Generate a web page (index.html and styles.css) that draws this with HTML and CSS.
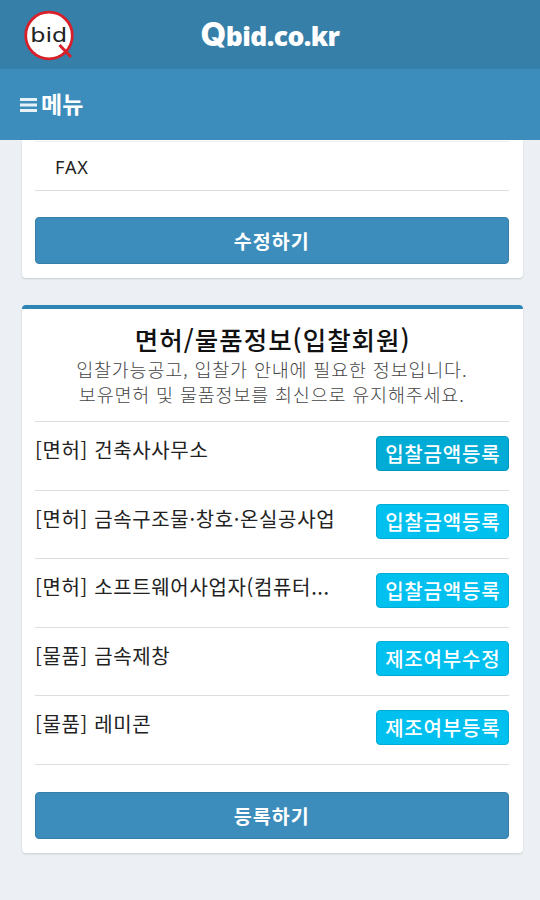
FILE: index.html
```html
<!DOCTYPE html>
<html lang="ko">
<head>
<meta charset="utf-8">
<title>Qbid.co.kr</title>
<link rel="stylesheet" href="styles.css">
</head>
<body>
<header class="main-header">
  <svg class="logo" width="54" height="54" viewBox="0 0 54 54">
    <circle cx="27" cy="27.5" r="23.3" fill="#fff" stroke="#d7202a" stroke-width="2.8"/>
    <text class="logo-text" x="8.3" y="33.8" textLength="37" lengthAdjust="spacingAndGlyphs">bid</text>
    <path d="M37.5 37 L49 49" stroke="#d7202a" stroke-width="3"/>
  </svg>
  <h1 class="site-name"><span class="site-q">Q</span>bid.co.kr</h1>
</header>
<nav class="navbar">
  <svg class="menu-icon" width="17" height="15" viewBox="0 0 17 15">
    <path d="M0 2.5h17M0 8h17M0 13.5h17" stroke="#e6f1f8" stroke-width="3"/>
  </svg>
  <span class="menu-text">메뉴</span>
</nav>
<section class="content">
  <div class="box box-info">
    <div class="fax">FAX</div>
    <button class="btn btn-primary">수정하기</button>
  </div>
  <div class="box box-license">
    <h2 class="box-title">면허/물품정보(입찰회원)</h2>
    <p class="box-desc">입찰가능공고, 입찰가 안내에 필요한 정보입니다.<br>보유면허 및 물품정보를 최신으로 유지해주세요.</p>
    <ul class="list">
      <li class="item"><span class="name">[면허] 건축사사무소</span><button class="btn btn-info active">입찰금액등록</button></li>
      <li class="item"><span class="name">[면허] 금속구조물·창호·온실공사업</span><button class="btn btn-info">입찰금액등록</button></li>
      <li class="item"><span class="name">[면허] 소프트웨어사업자(컴퓨터...</span><button class="btn btn-info">입찰금액등록</button></li>
      <li class="item"><span class="name">[물품] 금속제창</span><button class="btn btn-info">제조여부수정</button></li>
      <li class="item"><span class="name">[물품] 레미콘</span><button class="btn btn-info">제조여부등록</button></li>
    </ul>
    <button class="btn btn-primary">등록하기</button>
  </div>
</section>
</body>
</html>
```
FILE: styles.css
```css
* {
  box-sizing: border-box;
}
body {
  margin: 0;
  height: 900px;
  overflow: hidden;
  background-color: #ecf0f5;
  color: #222;
  font-family: "Noto Sans CJK KR", sans-serif;
}
.main-header {
  display: grid;
  grid-template-columns: 54px 1fr 54px;
  align-items: center;
  height: 69px;
  padding: 0 22px;
  background-color: #367fa9;
}
.logo {
  display: block;
}
.logo-text {
  font-family: "DejaVu Sans", sans-serif;
  font-size: 20px;
  fill: #222;
}
.site-name {
  margin: 0;
  color: #fff;
  font-family: "Open Sans", sans-serif;
  font-size: 26.5px;
  font-weight: 800;
  line-height: 40px;
  letter-spacing: -0.6px;
  text-align: center;
  white-space: nowrap;
}
.site-q {
  font-family: Inter, sans-serif;
  font-size: 33px;
  font-weight: 800;
}
.navbar {
  display: flex;
  align-items: center;
  gap: 4px;
  height: 71px;
  padding: 0 20px;
  background-color: #3c8dbc;
  color: #fff;
}
.menu-text {
  padding-bottom: 4px;
  font-size: 23px;
  font-weight: bold;
  line-height: 30px;
}
.content {
  padding: 0 17.5px 0 21.5px;
}
.box {
  padding: 0 14px 14px 13.5px;
  background-color: #fff;
  border-radius: 4px;
  box-shadow: 0 1px 2px rgba(0,0,0,0.15);
}
.box-info {
  height: 138px;
  padding-top: 1px;
  border-radius: 0 0 4px 4px;
}
.fax {
  height: 50px;
  margin-bottom: 26px;
  padding-left: 20px;
  border-top: 1px solid #eee;
  border-bottom: 1px solid #ddd;
  font-family: "Noto Sans", sans-serif;
  font-size: 18px;
  line-height: 50px;
  letter-spacing: 0.9px;
}
.box-license {
  height: 548px;
  margin-top: 27px;
  border-top: 4px solid #2e86b5;
}
.btn {
  display: block;
  padding: 0;
  border: 1px solid #367fa9;
  border-radius: 4px;
  color: #fff;
  font-family: inherit;
}
.btn-primary {
  width: 100%;
  height: 47px;
  background-color: #3c8dbc;
  font-size: 19.5px;
  font-weight: bold;
  line-height: 45px;
  letter-spacing: 1.1px;
}
.btn-info {
  flex: none;
  width: 132.5px;
  height: 35px;
  border-color: #00acd6;
  background-color: #00c0ef;
  font-size: 20px;
  font-weight: 500;
  line-height: 33px;
  letter-spacing: 0.8px;
  text-indent: 1px;
}
.active {
  border-color: #0097bc;
  background-color: #00acd6;
}
.box-title {
  margin: 0;
  padding-top: 12px;
  color: #111;
  font-size: 25.5px;
  font-weight: 500;
  line-height: 36px;
  letter-spacing: 1px;
  text-align: center;
  text-indent: 2px;
}
.box-desc {
  margin: 0 0 14px;
  color: #444;
  font-size: 18.5px;
  font-weight: 300;
  line-height: 25px;
  letter-spacing: 0.8px;
  text-align: center;
  white-space: nowrap;
}
.list {
  margin: 0 0 27px;
  padding: 0;
  border-top: 1px solid #ddd;
  list-style: none;
}
.item {
  display: flex;
  justify-content: space-between;
  align-items: flex-start;
  height: 68.6px;
  padding-top: 13.5px;
  border-bottom: 1px solid #ddd;
}
.name {
  margin-top: -0.5px;
  font-size: 20px;
  line-height: 30px;
  letter-spacing: 0.65px;
  white-space: nowrap;
}
```
